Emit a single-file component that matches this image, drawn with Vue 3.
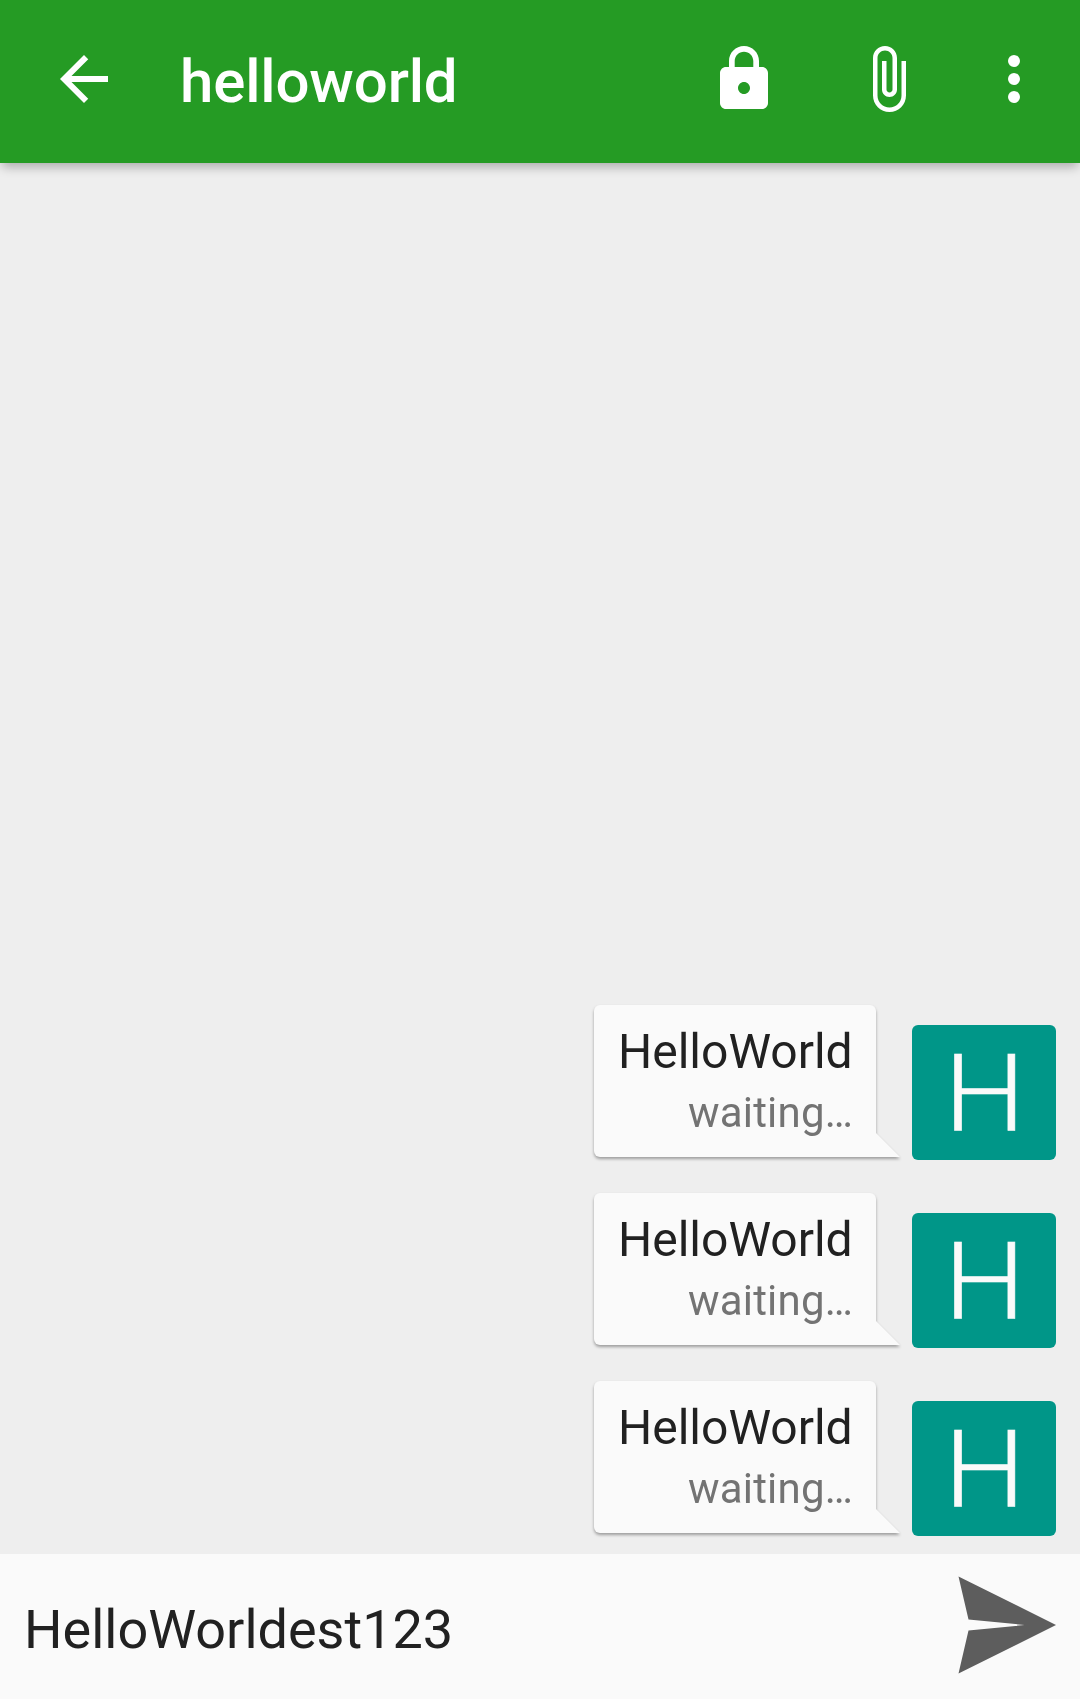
<script setup>
const messages = [
  { id: 1, text: 'HelloWorld', status: 'waiting…', initial: 'H' },
  { id: 2, text: 'HelloWorld', status: 'waiting…', initial: 'H' },
  { id: 3, text: 'HelloWorld', status: 'waiting…', initial: 'H' },
]
</script>

<template>
  <div class="chat">
    <header class="toolbar">
      <svg class="icon" viewBox="0 0 24 24">
        <path d="M20 11H7.83l5.59-5.59L12 4l-8 8 8 8 1.41-1.41L7.83 13H20v-2z" />
      </svg>
      <h1 class="title">helloworld</h1>
      <div class="actions">
        <svg class="icon" viewBox="0 0 24 24">
          <path
            fill-rule="evenodd"
            d="M18 8h-1V6c0-2.76-2.24-5-5-5S7 3.24 7 6v2H6c-1.1 0-2 .9-2 2v10c0 1.1.9 2 2 2h12c1.1 0 2-.9 2-2V10c0-1.1-.9-2-2-2zm-6 9c-1.1 0-2-.9-2-2s.9-2 2-2 2 .9 2 2-.9 2-2 2zm3.1-9H8.9V6c0-1.71 1.39-3.1 3.1-3.1s3.1 1.39 3.1 3.1v2z"
          />
        </svg>
        <svg class="icon" viewBox="0 0 24 24">
          <path
            d="M16.5 6v11.5c0 2.21-1.79 4-4 4s-4-1.79-4-4V5c0-1.38 1.12-2.5 2.5-2.5s2.5 1.12 2.5 2.5v10.5c0 .55-.45 1-1 1s-1-.45-1-1V6H10v9.5c0 1.38 1.12 2.5 2.5 2.5s2.5-1.12 2.5-2.5V5c0-2.21-1.79-4-4-4S7 2.79 7 5v12.5c0 3.04 2.46 5.5 5.5 5.5s5.5-2.46 5.5-5.5V6h-1.5z"
          />
        </svg>
        <svg class="icon more" viewBox="0 0 24 24">
          <circle cx="12" cy="6" r="2" />
          <circle cx="12" cy="12" r="2" />
          <circle cx="12" cy="18" r="2" />
        </svg>
      </div>
    </header>

    <main class="messages">
      <div v-for="m in messages" :key="m.id" class="message">
        <div class="bubble">
          <div class="card">
            <p class="text">{{ m.text }}</p>
            <p class="status">{{ m.status }}</p>
          </div>
          <svg class="tail" viewBox="0 0 24 24"><path d="M0 0L24 24H0z" /></svg>
        </div>
        <div class="avatar"><span class="initial">{{ m.initial }}</span></div>
      </div>
    </main>

    <footer class="composer">
      <span class="draft">HelloWorldest123</span>
      <svg class="send" viewBox="0 0 98 98">
        <path d="M.5.5L98 49L.5 97.500L10.500 54.500L66.500 49L10.500 43.500z" />
      </svg>
    </footer>
  </div>
</template>

<style>
body {
  margin: 0;
}
</style>

<style scoped>
.chat {
  display: flex;
  flex-direction: column;
  width: 1080px;
  height: 1699px;
  overflow: hidden;
  background: #eee;
  color: #212121;
  font-family: Roboto, 'Liberation Sans', sans-serif;
}

.toolbar {
  display: flex;
  align-items: center;
  flex: none;
  box-sizing: border-box;
  height: 163px;
  padding: 0 30px 0 48px;
  background: #259b24;
  box-shadow: 0 6px 10px -2px rgba(0, 0, 0, 0.28);
}

.icon {
  display: block;
  flex: none;
  width: 72px;
  height: 72px;
  margin-bottom: 5px;
  fill: #fff;
}

.title {
  margin: 0 0 0 60px;
  color: #fff;
  font-size: 60px;
  font-weight: 500;
  line-height: 70px;
  letter-spacing: -0.15px;
}

.actions {
  display: flex;
  gap: 72px;
  margin-left: auto;
}

.more {
  margin-left: -18px;
}

.messages {
  display: flex;
  flex: 1;
  flex-direction: column;
  justify-content: flex-end;
  gap: 33px;
  padding: 0 24px 18px;
}

.message {
  display: flex;
  align-items: flex-end;
  justify-content: flex-end;
}

.bubble {
  display: flex;
  align-items: flex-end;
  margin: 0 12px 3px 0;
  filter: drop-shadow(0 2px 1.5px rgba(0, 0, 0, 0.34));
}

.card {
  box-sizing: border-box;
  width: 282px;
  height: 152px;
  padding: 18px 24px 0;
  border-radius: 6px 6px 0 6px;
  background: #fafafa;
  text-align: right;
  white-space: nowrap;
}

.text,
.status {
  margin: 0;
}

.text {
  font-size: 48px;
  line-height: 57px;
}

.status {
  margin: 8px -1px 0 0;
  color: #737373;
  font-size: 42px;
  line-height: 50px;
  letter-spacing: 0.2px;
}

.tail {
  display: block;
  width: 24px;
  height: 24px;
  fill: #fafafa;
}

.avatar {
  width: 144px;
  height: 135px;
  border-radius: 6px;
  background: #009688;
  color: #fafafa;
  font-size: 108px;
  font-weight: 300;
  line-height: 138px;
  text-align: center;
}

.initial {
  display: inline-block;
  transform: translateX(0.5px) scaleX(1.06);
  -webkit-text-stroke: 0.6px #fafafa;
}

.composer {
  display: flex;
  align-items: center;
  justify-content: space-between;
  flex: none;
  box-sizing: border-box;
  height: 145px;
  padding: 0 24px;
  background: #fafafa;
}

.draft {
  padding-top: 6px;
  font-size: 54px;
  line-height: 64px;
}

.send {
  display: block;
  width: 98px;
  height: 98px;
  margin-bottom: 3px;
  fill: #5d5d5d;
}
</style>
